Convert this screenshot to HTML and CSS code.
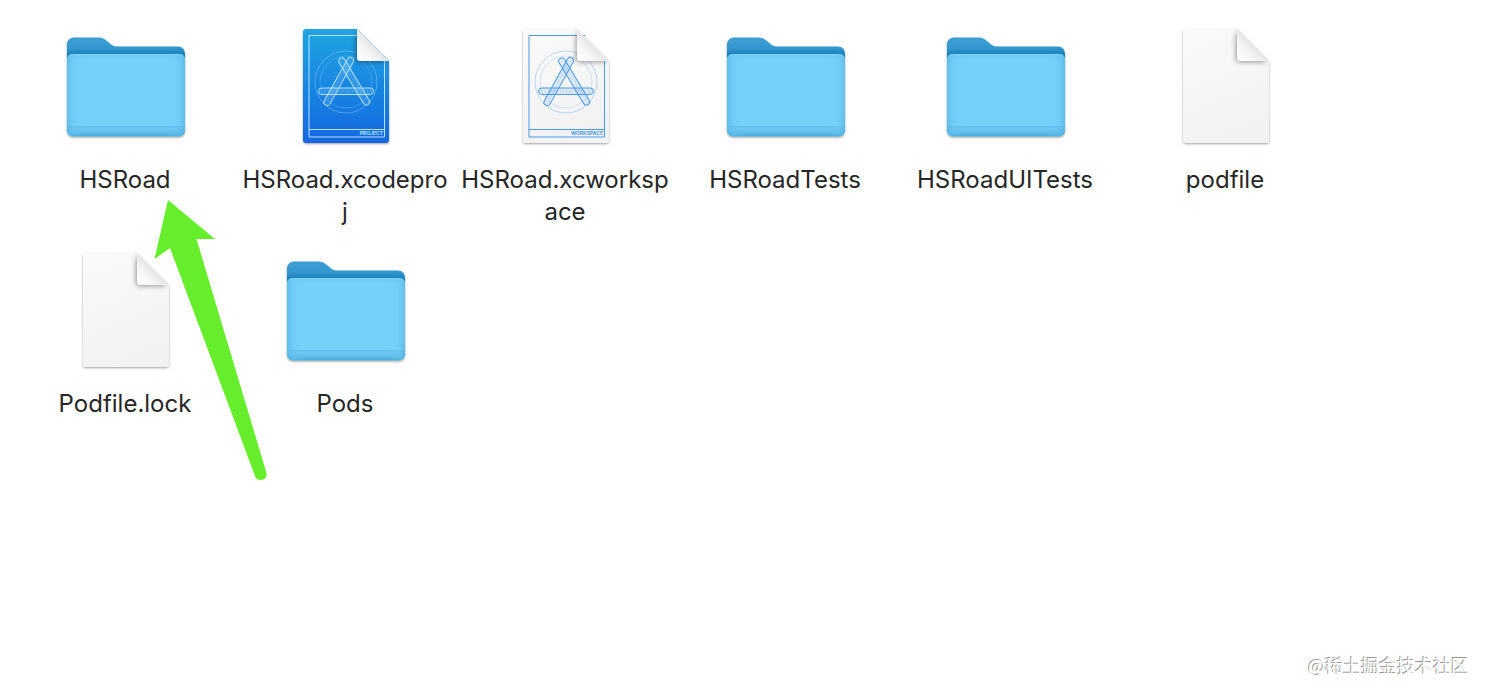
FILE: index.html
```html
<!DOCTYPE html>
<html lang="zh-CN">
<head>
  <meta charset="UTF-8" />
  <meta name="viewport" content="width=device-width, initial-scale=1.0"/>
  <title>HSRoad</title>
  <link rel="stylesheet" href="styles.css">
</head>
<body>
  <!-- Shared icon shapes -->
  <svg class="sprite" aria-hidden="true">
    <defs>
      <linearGradient id="folderBack" x1="0" y1="0" x2="0" y2="1">
        <stop offset="0" stop-color="#3f9fd3"/>
        <stop offset="0.1" stop-color="#3498d0"/>
        <stop offset="0.17" stop-color="#1d83bb"/>
        <stop offset="1" stop-color="#1d83bb"/>
      </linearGradient>
      <linearGradient id="folderEdge" x1="0" y1="0" x2="1" y2="0">
        <stop offset="0" stop-color="#4fb2e0" stop-opacity="0.6"/>
        <stop offset="0.06" stop-color="#68c4f0" stop-opacity="0.3"/>
        <stop offset="0.15" stop-color="#76d0fb" stop-opacity="0"/>
        <stop offset="0.85" stop-color="#76d0fb" stop-opacity="0"/>
        <stop offset="0.94" stop-color="#68c4f0" stop-opacity="0.3"/>
        <stop offset="1" stop-color="#4fb2e0" stop-opacity="0.6"/>
      </linearGradient>
      <linearGradient id="folderFront" x1="0" y1="0" x2="0" y2="1">
        <stop offset="0" stop-color="#6dc9f5"/>
        <stop offset="0.08" stop-color="#76d0fa"/>
        <stop offset="0.87" stop-color="#76d0fa"/>
        <stop offset="0.88" stop-color="#5fbde9"/>
        <stop offset="0.9" stop-color="#6dc8f3"/>
        <stop offset="0.95" stop-color="#5fbbe7"/>
        <stop offset="1" stop-color="#4ba9d6"/>
      </linearGradient>
      <linearGradient id="paper" x1="0" y1="0" x2="0.3" y2="1">
        <stop offset="0" stop-color="#fafafa"/>
        <stop offset="1" stop-color="#f2f2f2"/>
      </linearGradient>
      <linearGradient id="blueprint" x1="0" y1="0" x2="0" y2="1">
        <stop offset="0" stop-color="#20a5e2"/>
        <stop offset="1" stop-color="#1268e0"/>
      </linearGradient>
      <linearGradient id="curl" x1="0" y1="1" x2="0.5" y2="0.5">
        <stop offset="0" stop-color="#ffffff"/>
        <stop offset="0.5" stop-color="#f8f8f8"/>
        <stop offset="1" stop-color="#e6e6e6"/>
      </linearGradient>
      <filter id="drop" x="-10%" y="-10%" width="120%" height="120%">
        <feDropShadow dx="0" dy="1" stdDeviation="1" flood-color="#000" flood-opacity="0.38"/>
      </filter>
      <filter id="soft" x="-40%" y="-40%" width="180%" height="180%">
        <feGaussianBlur stdDeviation="2.5"/>
      </filter>
      <clipPath id="pageClip">
        <path d="M25 7H76L108 39V118a3 3 0 0 1-3 3H25a3 3 0 0 1-3-3V10a3 3 0 0 1 3-3Z"/>
      </clipPath>
    </defs>

    <symbol id="folder" viewBox="0 0 128 128">
      <g filter="url(#drop)">
        <path fill="url(#folderBack)" d="M6 23c0-5 3-7.500 8-7.500H37c4 0 6 1 9 3.500l4 3.500c2 1.500 4 2 7 2H116.500c5 0 7.500 3 7.500 8V106c0 5-3 8-8 8H14c-5 0-8-3-8-8Z"/>
        <path fill="url(#folderFront)" d="M6 38c0-4 2-6 6.500-6H117.500c4.500 0 6.500 2 6.500 6V107.500c0 4.500-2.500 7-7 7H13c-4.500 0-7-2.500-7-7Z"/>
        <path fill="url(#folderEdge)" d="M6 38c0-4 2-6 6.500-6H117.500c4.500 0 6.500 2 6.500 6V107.500c0 4.500-2.500 7-7 7H13c-4.500 0-7-2.500-7-7Z"/>
        <path fill="none" stroke="#8fdaff" stroke-opacity="0.5" d="M8 35c1-1.700 2.500-2.500 5-2.500H117c2.500 0 4 .8 5 2.500"/>
      </g>
    </symbol>

    <symbol id="page" viewBox="0 0 128 128">
      <path filter="url(#drop)" d="M25 7H76L108 39V118a3 3 0 0 1-3 3H25a3 3 0 0 1-3-3V10a3 3 0 0 1 3-3Z"/>
    </symbol>

    <symbol id="fold" viewBox="0 0 128 128">
      <g clip-path="url(#pageClip)">
        <path fill="#000" fill-opacity="0.4" filter="url(#soft)" d="M75 10V37q0 3 3 3H106Z"/>
      </g>
      <path fill="url(#curl)" d="M76 7L108 39H79q-3 0-3-3Z"/>
    </symbol>

    <symbol id="blueprintArt" viewBox="0 0 128 128">
      <g fill="none" stroke="currentColor">
        <path d="M84 13.500H28V115H103.500V39M28 107.500H103.500"/>
        <circle cx="65" cy="60" r="31" stroke-width="0.6" stroke-opacity="0.6"/>
        <circle cx="65" cy="60" r="26" stroke-width="0.5" stroke-opacity="0.45"/>
        <g fill="currentColor" fill-opacity="0.15">
          <rect x="69.900" y="32.500" width="6.500" height="54" rx="3.250" transform="rotate(-31 73.100 59.500)"/>
          <rect x="37.500" y="66" width="55" height="6.500" rx="3.250"/>
          <rect x="54.500" y="32.500" width="6.500" height="54" rx="3.250" transform="rotate(29 57.700 59.500)"/>
        </g>
        <path stroke-width="2" stroke-opacity="0.25" stroke-dasharray="1 2" d="M44 69.300H88M48 77L66 44M64 44L83 75"/>
      </g>
    </symbol>
  </svg>

  <main class="finder">
    <ul class="files">
      <li class="file">
        <svg class="icon" aria-hidden="true"><use href="#folder"/></svg>
        <span class="name">HSRoad</span>
      </li>
      <li class="file">
        <svg class="icon project" viewBox="0 0 128 128" aria-hidden="true">
          <use href="#page" fill="url(#blueprint)"/>
          <use href="#blueprintArt"/>
          <text class="tag" x="102" y="113" text-anchor="end">PROJECT</text>
          <use href="#fold"/>
        </svg>
        <span class="name">HSRoad.xcodeproj</span>
      </li>
      <li class="file">
        <svg class="icon workspace" viewBox="0 0 128 128" aria-hidden="true">
          <use href="#page" fill="url(#paper)"/>
          <use href="#blueprintArt"/>
          <text class="tag" x="102" y="113" text-anchor="end">WORKSPACE</text>
          <use href="#fold"/>
        </svg>
        <span class="name">HSRoad.xcworkspace</span>
      </li>
      <li class="file">
        <svg class="icon" aria-hidden="true"><use href="#folder"/></svg>
        <span class="name">HSRoadTests</span>
      </li>
      <li class="file">
        <svg class="icon" aria-hidden="true"><use href="#folder"/></svg>
        <span class="name">HSRoadUITests</span>
      </li>
      <li class="file">
        <svg class="icon" aria-hidden="true"><use href="#page" fill="url(#paper)"/><use href="#fold"/></svg>
        <span class="name">podfile</span>
      </li>
      <li class="file">
        <svg class="icon" aria-hidden="true"><use href="#page" fill="url(#paper)"/><use href="#fold"/></svg>
        <span class="name">Podfile.lock</span>
      </li>
      <li class="file">
        <svg class="icon" aria-hidden="true"><use href="#folder"/></svg>
        <span class="name">Pods</span>
      </li>
    </ul>

    <!-- Arrow pointing at the HSRoad folder -->
    <svg class="arrow" viewBox="0 0 120 290" aria-hidden="true">
      <path fill="#66ee2d" d="M18 0L65 39H46.500L116 271.500c2 5-1 8.500-5 8.500-3 0-5-1-6-4L20 48 4.500 59Z"/>
    </svg>
  </main>

  <footer class="watermark">@稀土掘金技术社区</footer>
</body>
</html>
```

FILE: styles.css
```css
* {
  margin: 0;
  padding: 0;
  box-sizing: border-box;
}

body {
  font-family: Inter, 'Noto Sans CJK SC', sans-serif;
  background: #fff;
  color: #262626;
  min-height: 100vh;
  display: flex;
  flex-direction: column;
}

.sprite {
  position: absolute;
  width: 0;
  height: 0;
}

.finder {
  position: relative;
  flex: 1;
  padding: 22px 15px;
}

.files {
  list-style: none;
  display: grid;
  grid-template-columns: repeat(auto-fill, 220px);
  row-gap: 18px;
}

.file {
  display: flex;
  flex-direction: column;
  align-items: center;
  gap: 14px;
}

.icon {
  width: 128px;
  height: 128px;
}

.name {
  width: 208px;
  font-size: 24px;
  line-height: 32px;
  text-align: center;
  overflow-wrap: anywhere;
}

.tag {
  font-size: 5px;
  font-weight: 700;
  fill: currentColor;
}

.project {
  color: #b5e2ff;
}

.workspace {
  color: #4a9ae8;
}

/* sits on top of the files */
.arrow {
  position: absolute;
  top: 200px;
  left: 150px;
  width: 120px;
  height: 290px;
}

.watermark {
  padding: 0 19px 18px;
  font-family: 'Noto Sans CJK SC', sans-serif;
  font-size: 18px;
  line-height: 26px;
  text-align: right;
  color: #fff;
  text-shadow: -1px -1px 0 #999;
}
```
